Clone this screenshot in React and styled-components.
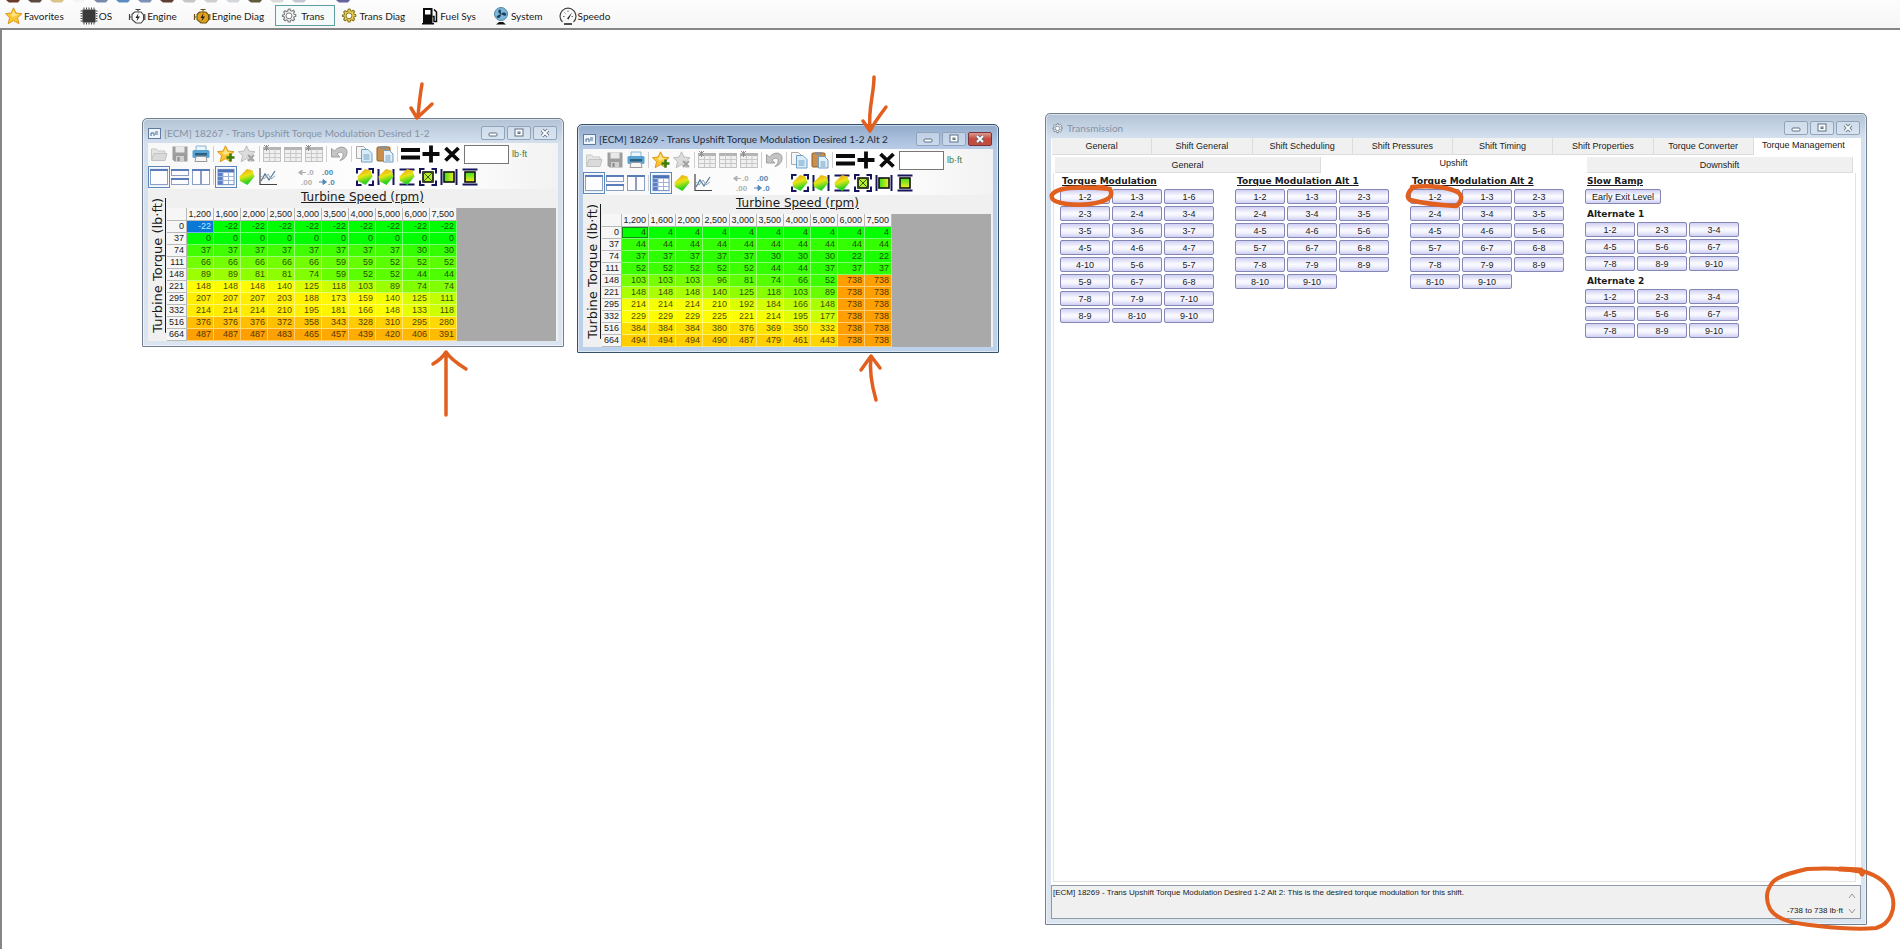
import React from 'react'
import styled, { createGlobalStyle, css } from 'styled-components'

const uiFont = "Lato, 'Open Sans', sans-serif"
const smallFont = "'Liberation Sans', sans-serif"
const wideFont = "'DejaVu Sans', sans-serif"
const ink = '#e2601f'

const GlobalStyle = createGlobalStyle`
    * { box-sizing: border-box; }
    body {
        margin: 0;
        background: #fff;
        font-family: ${uiFont};
        font-size: 10px;
        color: #1a1a1a;
    }
    button, input {
        font: inherit;
        color: inherit;
        margin: 0;
    }
`

const Shell = styled.div`
    position: relative;
    display: flex;
    flex-direction: column;
    min-height: 100vh;
    overflow: hidden;
`

/* ---------- top bars ---------- */

const TopBars = styled.header`
    background: linear-gradient(#fdfdfd, #f6f6f7);
`

const CutRow = styled.div`
    display: flex;
    height: 4px;
    padding-left: 4px;
    overflow: hidden;
`

const CutSlot = styled.svg`
    flex: none;
    width: 22px;
    height: 4px;
`

const NavRow = styled.nav`
    display: flex;
    align-items: center;
    height: 24px;
    padding-bottom: 1px;
`

const NavItem = styled.button`
    display: flex;
    align-items: center;
    gap: ${p => (p.$on ? 3 : 1)}px;
    height: 21px;
    padding: 0 10px 0 4px;
    border: 1px solid ${p => (p.$on ? '#5f9ea0' : 'transparent')};
    background: ${p => (p.$on ? '#f4fafa' : 'transparent')};
    font-size: 10px;
    white-space: nowrap;
    svg {
        width: 18px;
        height: 18px;
    }
`

const Desktop = styled.main`
    position: relative;
    flex: 1;
    border-top: 2px solid #868686;
    border-left: 2px solid #868686;
    background: #fff;
`

/* ---------- window frame ---------- */

const Frame = styled.section`
    position: absolute;
    display: flex;
    flex-direction: column;
    padding: 0 5px 5px;
    border: 1px solid ${p => (p.$active ? '#35506b' : '#717f8e')};
    border-radius: 5px 5px 1px 1px;
    background: ${p => (p.$active
        ? 'linear-gradient(#92abca, #b6cae6 22px, #bcd2ea)'
        : 'linear-gradient(#b3c4d6, #d4e0ee 24px, #dbe5f0)')};
    box-shadow: inset 0 0 0 1px rgba(255, 255, 255, 0.5);
`

const TableFrame = styled(Frame)`
    width: 422px;
`

const FirstPlace = styled(TableFrame)`
    left: 140px;
    top: 88px;
`

const SecondPlace = styled(TableFrame)`
    left: 575px;
    top: 94px;
`

const TransPlace = styled(Frame)`
    left: 1043px;
    top: 83px;
    width: 822px;
    height: 812px;
`

const TitleBar = styled.div`
    display: flex;
    align-items: center;
    gap: 3px;
    height: 24px;
    padding-top: 4px;
    color: ${p => (p.$active ? '#1c2a3c' : '#8593a4')};
    h1 {
        flex: 1;
        margin: 0;
        font-size: 10px;
        font-weight: 400;
        white-space: nowrap;
    }
`

const TitleIcon = styled.svg`
    width: 13px;
    height: 13px;
`

const WinButtons = styled.div`
    display: flex;
    gap: 2px;
    align-self: flex-start;
    margin: 3px 1px 0 0;
`

const WinButton = styled.button`
    display: flex;
    align-items: center;
    justify-content: center;
    width: 24px;
    height: 14px;
    padding: 0;
    border: 1px solid ${p => (p.$red ? '#7c3038' : '#92a4b9')};
    border-radius: 2px;
    background: ${p => (p.$red
        ? 'linear-gradient(#dd9a90, #c24a3e 50%, #c0503f)'
        : 'rgba(225, 235, 246, 0.5)')};
    svg {
        width: 12px;
        height: 10px;
    }
`

/* ---------- table editor ---------- */

const Body = styled.div`
    background: #f0f0f0;
`

const ToolRow = styled.div`
    display: flex;
    align-items: center;
    gap: 3px;
    height: ${p => (p.$tall ? 24 : 22)}px;
    padding-left: 2px;
    background: linear-gradient(90deg, #f8f8f8, #fff 70%, #f2f2f2);
`

const Tool = styled.button`
    display: flex;
    flex: none;
    width: 18px;
    height: 18px;
    padding: 0;
    border: 0;
    background: transparent;
    ${p => p.$on && css`
        outline: 1px solid #5b87bd;
        outline-offset: 1px;
        background: #e6effa;
    `}
    svg {
        width: 18px;
        height: 18px;
    }
`

const Sep = styled.span`
    width: 1px;
    height: 16px;
    background: #cfcfcf;
`

const Spacer = styled.span`
    width: ${p => p.$w}px;
`

const ValueBox = styled.input`
    width: 45px;
    height: 19px;
    border: 1px solid #777;
    background: #fff;
    font-family: ${smallFont};
`

const Unit = styled.label`
    font-family: ${smallFont};
    font-size: 9px;
    color: #3b7a3b;
`

const Sheet = styled.div`
    display: flex;
`

const YAxis = styled.div`
    display: flex;
    align-items: center;
    justify-content: center;
    width: 19px;
    span {
        writing-mode: vertical-rl;
        transform: rotate(180deg);
        font-family: ${wideFont};
        font-size: 13px;
        line-height: 16px;
        text-decoration: underline;
        white-space: nowrap;
    }
`

const SheetMain = styled.div`
    flex: 1;
`

const XAxis = styled.div`
    height: 19px;
    font-family: ${wideFont};
    font-size: 12px;
    line-height: 16px;
    text-align: center;
    text-decoration: underline;
`

const GridArea = styled.div`
    margin-right: 2px;
    background: #a9a9a9;
`

const Grid = styled.table`
    border-collapse: separate;
    border-spacing: 0;
    table-layout: fixed;
    width: 290px;
    font-family: ${smallFont};
    font-size: 9px;
    line-height: 11px;
    th, td {
        height: 12px;
        padding: 0 2px 0 0;
        text-align: right;
        font-weight: 400;
        border-right: 1px solid rgba(255, 255, 255, 0.45);
        border-bottom: 1px solid rgba(255, 255, 255, 0.45);
    }
    th {
        background: #f6f6f6;
        border-color: #b9b9b9;
        color: #222;
    }
    thead th { height: 13px; }
    th:first-child { width: 20px; }
`

const Cell = styled.td`
    color: ${p => (p.$mark === 'selected' ? '#bfe3ff' : 'rgba(30, 22, 0, 0.82)')};
    ${p => p.$mark === 'focus' && 'box-shadow: inset 0 0 0 1px #138a13;'}
`

/* ---------- transmission window ---------- */

const TabStrip = styled.div`
    display: flex;
    height: ${p => (p.$inner ? 16 : 17)}px;
    margin: ${p => (p.$inner ? '2px 8px 0 4px' : '0 7px 0 1px')};
`

const Tab = styled.button`
    flex: 1;
    padding: 0 0 ${p => (p.$on ? 3 : 0)}px;
    border: 0;
    border-right: 1px solid ${p => (p.$on ? '#fff' : '#dcdcdc')};
    border-bottom: 1px solid ${p => (p.$on ? '#fff' : '#dcdcdc')};
    background: ${p => (p.$on ? '#fff' : '#f0f0f0')};
    font-family: ${smallFont};
    font-size: 9px;
    line-height: 12px;
    white-space: nowrap;
`

const TransBody = styled.div`
    flex: 1;
    display: flex;
    flex-direction: column;
    background: #fff;
    min-height: 0;
`

const TransPanel = styled.div`
    flex: 1;
    display: flex;
    align-items: flex-start;
    gap: 20px;
    margin: 0 5px 3px 2px;
    padding: 2px 0 0 6px;
    border: 1px solid #e3e3e3;
    border-top: 0;
`

const Group = styled.div`
    width: 155px;
`

const GroupTitle = styled.h2`
    margin: 0 0 2px 2px;
    font-family: ${wideFont};
    font-size: 9px;
    line-height: 12px;
    font-weight: 700;
    text-decoration: ${p => (p.$plain ? 'none' : 'underline')};
    white-space: nowrap;
`

const GearGrid = styled.div`
    display: grid;
    grid-template-columns: repeat(3, 50px);
    gap: 2px;
    margin-bottom: 4px;
`

const GearButton = styled.button`
    height: 15px;
    width: ${p => (p.$wide ? 76 : 50)}px;
    padding: 0;
    border: 1px solid #8486b4;
    border-radius: 2px;
    background: linear-gradient(#cfcff3, #fafaff 45%, #f4f4fe 65%, #cfcff3);
    font-family: ${smallFont};
    font-size: 9px;
    line-height: 12px;
    white-space: nowrap;
`

const StatusBox = styled.footer`
    display: flex;
    justify-content: space-between;
    height: 34px;
    padding: 1px 4px 1px 1px;
    border: 1px solid #8f9aa6;
    background: #f0f0f0;
    font-family: ${smallFont};
    font-size: 8px;
    line-height: 12px;
    p { margin: 0; }
`

const Range = styled.div`
    display: flex;
    align-items: flex-end;
    gap: 5px;
    svg {
        width: 8px;
        height: 28px;
    }
`

const Ink = styled.svg`
    position: absolute;
    top: 0;
    left: 0;
    width: 100%;
    height: 100%;
    pointer-events: none;
    fill: none;
    stroke: ${ink};
    stroke-width: 3.5;
    stroke-linecap: round;
    stroke-linejoin: round;
`

/* ---------- icons ---------- */

const gearTeeth = 'M9 1.5l1.3 0 .5 2 1.5.6 1.8-1.1 1.7 1.7-1.1 1.8.6 1.5 2 .5v1.8l-2 .5-.6 1.5 1.1 1.8-1.7 1.7-1.8-1.1-1.5.6-.5 2H8l-.5-2-1.5-.6-1.8 1.1-1.7-1.7 1.1-1.8-.6-1.5-2-.5V9l2-.5.6-1.5-1.1-1.8 1.7-1.7L6 4.6l1.500-.6.5-2z'

const Gear = ({ line, fill }) => (
    <svg viewBox="-2 -1 22 22">
        <path d={gearTeeth} fill={fill} stroke={line} strokeWidth="1.300" />
        <circle cx="9" cy="9.800" r="3.600" fill="#fff" stroke={line} strokeWidth="1.200" />
    </svg>
)

const Star = ({ fill = '#fbc632', line = '#d99a1b', children }) => (
    <svg viewBox="0 0 18 18">
        <path d="M8.500.8l2.500 5.200 6 .7-4.500 4 1.400 6-5.400-3.100-5.300 3.100 1.400-6L.5 6.700 6.100 6z" fill={fill} stroke={line} strokeLinejoin="round" />
        {fill === '#fbc632' && <path d="M8.500 3.200l1.600 3.900 3.800.4-6 2.500-2.600-2.500 1.800-.4z" fill="#fde58a" />}
        {children}
    </svg>
)

const EngineIcon = ({ fill, line }) => (
    <svg viewBox="0 0 18 18">
        <path d="M7.500 2.500h5M10 2.500v2M1.500 7v6M1.500 10h2M16.800 7v6" stroke={line} strokeWidth="1.200" fill="none" />
        <path d="M4 7.500L6.500 5H13l2.500 3v5l-2.500 3H8l-4-3.500z" fill={fill} stroke={line} strokeWidth="1.100" />
        <path d="M10.500 6L7.500 11h2l-1 3.500 3.500-5h-2.200z" fill="#222" />
    </svg>
)

const TableIcon = ({ star }) => (
    <svg viewBox="0 0 18 18">
        <rect x="0.500" y="2.500" width="17" height="14" fill="#f0f0f0" stroke="#c2c2c2" />
        <path d="M0 3.500h18" stroke="#b4b4b4" strokeWidth="3" />
        <path d="M.5 8.500h17M.5 12.500h17M6.500 4v12M12 4v12" stroke="#c8c8c8" />
        {star && <path d="M1 0l5 5M6 0L1 5M3.500 0v6" stroke="#8e8e8e" />}
    </svg>
)

const Surface = ({ frame }) => (
    <svg viewBox="0 0 18 18">
        {frame}
        <path d="M1.500 8.500L9 1l5.500 1.500 2 6L9.500 17 2 13z" fill="url(#surf)" />
    </svg>
)

const BoxIcon = ({ frame, inner }) => (
    <svg viewBox="0 0 18 18">
        {frame}
        <rect x="4" y="4" width="10" height="10" fill={inner || '#b6ef2e'} stroke="#111" strokeWidth="1.600" />
        {!inner && <path d="M4 4l10 10M14 4L4 14" stroke="#3b5a10" />}
    </svg>
)

const corners = <path d="M1 5.500V1h4.500M12.500 1H17v4.500M17 12.500V17h-4.500M5.500 17H1v-4.500" fill="none" stroke="#16165e" strokeWidth="2" />
const sides = <path d="M1.500 1v16M16.500 1v16" stroke="#16165e" strokeWidth="2" />
const caps = <path d="M1.500 1.500h15M1.500 16.500h15" stroke="#16165e" strokeWidth="2" />

const PaneBox = ({ x, y, w, h }) => (
    <>
        <rect x={x + 0.5} y={y + 0.5} width={w - 1} height={h - 1} fill="#fdfdff" stroke="#8c9fc2" />
        <path d={`M${x} ${y + 1}h${w}`} stroke="#5a7cba" strokeWidth="2" />
    </>
)

const DecimalIcon = ({ up }) => (
    <svg viewBox="0 0 18 18" fontFamily="Liberation Sans, sans-serif" fontWeight="700" fontSize="8" fill={up ? '#5189b5' : '#b0b0b0'}>
        <text x={up ? 3 : 9} y="7">{up ? '.00' : '.0'}</text>
        <text x={up ? 9 : 3} y="17">{up ? '.0' : '.00'}</text>
        <path d={up ? 'M0 14h4M4 11.500l3.500 2.500L4 16.500z' : 'M4 4.500h4M4 2L.5 4.500 4 7z'} stroke={up ? '#5189b5' : '#b0b0b0'} />
    </svg>
)

const icons = {
    folder: <svg viewBox="0 0 18 18"><path d="M1.500 15V4h5l1.500 2h7v3" fill="#e4e4e4" stroke="#c8c8c8" /><path d="M1.500 15.500L4 8.500h13L15 15.500z" fill="#dadada" stroke="#c2c2c2" /></svg>,
    save: <svg viewBox="0 0 18 18"><path d="M1.500 1.500h15v15h-13l-2-2z" fill="#9d9d9d" /><path d="M4.500 1.500h9v6h-9z" fill="#e8e8e8" /><path d="M5 11h8v5.500H5z" fill="#cfcfcf" /><path d="M6.500 12h2v4h-2z" fill="#888" /></svg>,
    print: <svg viewBox="0 0 18 18"><path d="M4 1h10v6H4z" fill="#eaf5fc" stroke="#8cb4cf" /><rect x="0.500" y="5" width="17" height="8" rx="1.500" fill="#58a3d3" /><path d="M3 8h12v2.500H3z" fill="#2f5f80" /><path d="M4 11.500h10l1 5H3z" fill="#f5f5f5" stroke="#999" /></svg>,
    starAdd: <Star><path d="M13.500 8.500v8M9.500 12.500h8" stroke="#3c7d10" strokeWidth="2.600" /></Star>,
    starDel: <Star fill="#dcdcdc" line="#bcbcbc"><path d="M10 10l6 6M16 10l-6 6" stroke="#a2a2a2" strokeWidth="2" /></Star>,
    table: <TableIcon />,
    tableStar: <TableIcon star />,
    undo: <svg viewBox="0 0 18 18"><path d="M1.500 3.500v8.500h8.500l-3-3c3-3 7-2 6 2-.4 2-2 3-3 4.500 4-1 7-4 7-8.500 0-5-7-7.500-12.500-1z" fill="#c4c4c4" stroke="#9f9f9f" /></svg>,
    copy: <svg viewBox="0 0 18 18"><path d="M1.500 1.500h7l3 3v9h-10z" fill="#f5f5f5" stroke="#aaa" /><path d="M6.500 4.500h6.500l4 4v8.500H6.500z" fill="#d9ecf8" stroke="#6fa1c4" /><path d="M8.500 10h6M8.500 12h6M8.500 14h6" stroke="#6fa1c4" /></svg>,
    paste: <svg viewBox="0 0 18 18"><rect x="1" y="2" width="13" height="14" rx="1" fill="#c98f4b" stroke="#8f6128" /><path d="M4 1h7v3H4z" fill="#8f8f8f" /><path d="M7.500 5.500h6l3.500 3.500v8H7.500z" fill="#e4f1fa" stroke="#6f9dbf" /><path d="M9.500 11h5M9.500 13h5M9.500 15h5" stroke="#6f9dbf" /></svg>,
    equal: <svg viewBox="0 0 18 18" overflow="visible"><path d="M0 5h19M0 12.500h19" stroke="#0b0b0b" strokeWidth="4.200" /></svg>,
    plus: <svg viewBox="0 0 18 18"><path d="M0.500 9h17M9 0.500v17" stroke="#0b0b0b" strokeWidth="3.800" /></svg>,
    times: <svg viewBox="0 0 18 18"><path d="M2.500 3l13 12.500M15.500 3l-13 12.500" stroke="#0b0b0b" strokeWidth="3.800" /></svg>,
    paneOne: <svg viewBox="0 0 18 18"><PaneBox x={0} y={1} w={18} h={16} /></svg>,
    paneRows: <svg viewBox="0 0 18 18"><PaneBox x={0} y={1} w={18} h={7} /><PaneBox x={0} y={10} w={18} h={7} /></svg>,
    paneCols: <svg viewBox="0 0 18 18"><PaneBox x={0} y={1} w={9} h={16} /><PaneBox x={9} y={1} w={9} h={16} /></svg>,
    gridView: <svg viewBox="0 0 18 18"><rect x="1" y="1.500" width="16" height="15" fill="#fff" stroke="#7e97c4" /><path d="M1 3h16" stroke="#4e73b8" strokeWidth="3" /><path d="M1 5h5v11.500H1z" fill="#5b80c8" /><path d="M1 8.500h16M1 12.500h16M6 4v12M11.500 4v12" stroke="#9fb4d8" /></svg>,
    surface: <Surface />,
    chart: <svg viewBox="0 0 18 18"><path d="M1 0v16.500h17" stroke="#444" fill="none" strokeWidth="1.200" /><path d="M2 13l4-7 4 6 6-9" stroke="#4f7596" fill="none" strokeWidth="1.200" /><path d="M2 8l3 3 4-5 3 5 4-3" stroke="#8fa9bd" fill="none" /></svg>,
    decDown: <DecimalIcon />,
    decUp: <DecimalIcon up />,
    surfAll: <Surface frame={corners} />,
    surfSides: <Surface frame={sides} />,
    surfCaps: <Surface frame={caps} />,
    boxAll: <BoxIcon frame={corners} />,
    boxSides: <BoxIcon frame={sides} inner="url(#across)" />,
    boxCaps: <BoxIcon frame={caps} inner="url(#down)" />,
}

const toolsTop = [
    ['folder', 'Open'], ['save', 'Save'], ['print', 'Print'], '|',
    ['starAdd', 'Add favorite'], ['starDel', 'Remove favorite'], '|',
    ['tableStar', 'Table labels'], ['table', 'Column labels'], ['tableStar', 'Row labels'], '|',
    ['undo', 'Undo'], '|',
    ['copy', 'Copy'], ['paste', 'Paste'], '|',
    ['equal', 'Set'], ['plus', 'Add'], ['times', 'Multiply'],
]

const toolsBottom = [
    ['paneOne', 'Single pane', true], ['paneRows', 'Split rows'], ['paneCols', 'Split columns'], '|',
    ['gridView', 'Grid', true], ['surface', 'Surface'], ['chart', 'Chart'], 15,
    ['decDown', 'Fewer decimals'], ['decUp', 'More decimals'], 13,
    ['surfAll', 'Interpolate all'], ['surfSides', 'Interpolate across'], ['surfCaps', 'Interpolate down'],
    ['boxAll', 'Fill all'], ['boxSides', 'Fill across'], ['boxCaps', 'Fill down'],
]

const navItems = [
    ['Favorites', <Star />],
    ['OS', <svg viewBox="0 0 18 18"><rect x="2.500" y="2.500" width="13" height="13" fill="#3a3a3a" /><path d="M4 .5v17M6.500 .5v17M9 .5v17M11.500 .5v17M14 .5v17" stroke="#444" strokeDasharray="2 13" /><path d="M.5 4h17M.5 6.500h17M.5 9h17M.5 11.500h17M.5 14h17" stroke="#444" strokeDasharray="2 13" /></svg>],
    ['Engine', <EngineIcon fill="#fff" line="#444" />],
    ['Engine Diag', <EngineIcon fill="#e0a21c" line="#6b5017" />],
    ['Trans', <Gear line="#777" fill="#f4f4f4" />],
    ['Trans Diag', <Gear line="#8a761e" fill="#e8cf55" />],
    ['Fuel Sys', <svg viewBox="0 0 18 18"><path d="M2 1h9.500v15H13v1.500H1V16h1z" fill="#0b0b0b" /><path d="M4 3h5.500v4.500H4z" fill="#fff" /><path d="M11.500 9.500H13v5h2.500V5L13 2.500" fill="none" stroke="#0b0b0b" strokeWidth="1.500" /></svg>],
    ['System', <svg viewBox="0 0 18 18"><circle cx="9" cy="7" r="6.500" fill="#7db6d6" stroke="#4f86a8" /><path d="M9 7C5 6 6 2 8.500 2.500 9 4 9 5 9 7c3-3 6-1 5 1.500C12 9 10.500 8 9 7c0 4-3 5-4.500 3C5 8.500 7 7.500 9 7z" fill="#173f5c" /><path d="M4 17.500h10l-3-2.500H7z" fill="#111" /></svg>],
    ['Speedo', <svg viewBox="0 0 18 18"><path d="M3.500 15a8 8 0 1 1 11 0" fill="none" stroke="#444" strokeWidth="1.200" /><path d="M8 11.500l5-6-3.500 7z" fill="#222" /><path d="M5 17h8" stroke="#222" strokeWidth="1.600" /><path d="M4 9.500h1.500M9 3.500v1.500M12.500 9.500H14M5.500 5.500l1 1" stroke="#666" /></svg>],
]

const cutColors = ['#6b3b2a', '#5a4a42', '#d9c388', '#f5f5f5', '#7a8aa8', '#5b8dc4', '#7b90b5', '#5f3f33', '#c6c6c6', '#cfcfcf', '#d3d6dc', '#5e5a3c', '#dadada', '#c3c7cf', '#fafafa', '#6465a0']

const rpm = ['1,200', '1,600', '2,000', '2,500', '3,000', '3,500', '4,000', '5,000', '6,000', '7,500']
const torque = [0, 37, 74, 111, 148, 221, 295, 332, 516, 664]

const upshift = [
    [-22, -22, -22, -22, -22, -22, -22, -22, -22, -22],
    [0, 0, 0, 0, 0, 0, 0, 0, 0, 0],
    [37, 37, 37, 37, 37, 37, 37, 37, 30, 30],
    [66, 66, 66, 66, 66, 59, 59, 52, 52, 52],
    [89, 89, 81, 81, 74, 59, 52, 52, 44, 44],
    [148, 148, 148, 140, 125, 118, 103, 89, 74, 74],
    [207, 207, 207, 203, 188, 173, 159, 140, 125, 111],
    [214, 214, 214, 210, 195, 181, 166, 148, 133, 118],
    [376, 376, 376, 372, 358, 343, 328, 310, 295, 280],
    [487, 487, 487, 483, 465, 457, 439, 420, 406, 391],
]

const upshiftAlt = [
    [4, 4, 4, 4, 4, 4, 4, 4, 4, 4],
    [44, 44, 44, 44, 44, 44, 44, 44, 44, 44],
    [37, 37, 37, 37, 37, 30, 30, 30, 22, 22],
    [52, 52, 52, 52, 52, 44, 44, 37, 37, 37],
    [103, 103, 103, 96, 81, 74, 66, 52, 738, 738],
    [148, 148, 148, 140, 125, 118, 103, 89, 738, 738],
    [214, 214, 214, 210, 192, 184, 166, 148, 738, 738],
    [229, 229, 229, 225, 221, 214, 195, 177, 738, 738],
    [384, 384, 384, 380, 376, 369, 350, 332, 738, 738],
    [494, 494, 494, 490, 487, 479, 461, 443, 738, 738],
]

const mainTabs = ['General', 'Shift General', 'Shift Scheduling', 'Shift Pressures', 'Shift Timing', 'Shift Properties', 'Torque Converter', 'Torque Management']
const subTabs = ['General', 'Upshift', 'Downshift']

const modulation = '1-2 1-3 1-6 2-3 2-4 3-4 3-5 3-6 3-7 4-5 4-6 4-7 4-10 5-6 5-7 5-9 6-7 6-8 7-8 7-9 7-10 8-9 8-10 9-10'.split(' ')
const modulationAlt = '1-2 1-3 2-3 2-4 3-4 3-5 4-5 4-6 5-6 5-7 6-7 6-8 7-8 7-9 8-9 8-10 9-10'.split(' ')
const alternate = '1-2 2-3 3-4 4-5 5-6 6-7 7-8 8-9 9-10'.split(' ')

// green at the bottom of the range, yellow at 30 %, orange at the top
const heat = (value, max) => {
    const t = Math.max(0, value) / max
    if (t < 0.3) return `rgb(${Math.round((255 * t) / 0.3)}, 255, 0)`
    return `rgb(255, ${Math.round(255 - (95 * (t - 0.3)) / 0.7)}, 0)`
}

const cellColor = (value, max, mark) => (mark === 'selected' ? '#0a78d7' : heat(value, max))

const ToolItems = ({ items }) => items.map((item, i) => {
    if (item === '|') return <Sep key={i} />
    if (typeof item === 'number') return <Spacer key={i} $w={item} />
    return <Tool key={i} $on={item[2]} aria-label={item[1]}>{icons[item[0]]}</Tool>
})

const WindowControls = ({ active }) => {
    const line = '#5c7086'
    return (
        <WinButtons>
            <WinButton aria-label="Minimize">
                <svg viewBox="0 0 12 10"><rect x="2" y="5" width="8" height="3" rx="1" fill="#fff" stroke={line} /></svg>
            </WinButton>
            <WinButton aria-label="Maximize">
                <svg viewBox="0 0 12 10"><rect x="2" y="1" width="8" height="7" fill="#fff" stroke={line} /><rect x="5" y="4" width="2" height="1.500" fill="none" stroke={line} /></svg>
            </WinButton>
            <WinButton $red={active} aria-label="Close">
                <svg viewBox="0 0 12 10">
                    <path d="M3 2l6 6M9 2l-6 6" stroke={line} strokeWidth="3.600" />
                    <path d="M3 2l6 6M9 2l-6 6" stroke="#fff" strokeWidth="1.800" />
                </svg>
            </WinButton>
        </WinButtons>
    )
}

const TableWindow = ({ as: Place, id, title, active, rows, max, mark }) => (
    <Place $active={active}>
        <TitleBar $active={active}>
            <TitleIcon viewBox="0 0 13 13">
                <rect x="0.500" y="1.500" width="12" height="10" fill="#eef4fb" stroke="#5f7ba0" />
                <path d="M3 9V6h3v3M7 5h3M7 7h3" stroke="#4b6b96" fill="none" />
            </TitleIcon>
            <h1>{title}</h1>
            <WindowControls active={active} />
        </TitleBar>
        <Body>
            <ToolRow>
                <ToolItems items={toolsTop} />
                <ValueBox id={id} />
                <Unit htmlFor={id}>lb·ft</Unit>
            </ToolRow>
            <ToolRow $tall>
                <ToolItems items={toolsBottom} />
            </ToolRow>
            <Sheet>
                <YAxis><span>Turbine Torque (lb·ft)</span></YAxis>
                <SheetMain>
                    <XAxis>Turbine Speed (rpm)</XAxis>
                    <GridArea>
                        <Grid>
                            <thead>
                                <tr>
                                    <th />
                                    {rpm.map(r => <th key={r} scope="col">{r}</th>)}
                                </tr>
                            </thead>
                            <tbody>
                                {rows.map((row, y) => (
                                    <tr key={torque[y]}>
                                        <th scope="row">{torque[y]}</th>
                                        {row.map((value, x) => {
                                            const state = x === 0 && y === 0 ? mark : undefined
                                            return (
                                                <Cell key={x} $mark={state} style={{ backgroundColor: cellColor(value, max, state) }}>
                                                    {value}
                                                </Cell>
                                            )
                                        })}
                                    </tr>
                                ))}
                            </tbody>
                        </Grid>
                    </GridArea>
                </SheetMain>
            </Sheet>
        </Body>
    </Place>
)

const Gears = ({ list }) => (
    <GearGrid>
        {list.map(g => <GearButton key={g}>{g}</GearButton>)}
    </GearGrid>
)

const TransmissionWindow = () => (
    <TransPlace>
        <TitleBar>
            <TitleIcon as="span"><Gear line="#66727f" fill="#e8eef5" /></TitleIcon>
            <h1>Transmission</h1>
            <WindowControls />
        </TitleBar>
        <TransBody>
            <TabStrip role="tablist">
                {mainTabs.map(t => (
                    <Tab key={t} role="tab" aria-selected={t === 'Torque Management'} $on={t === 'Torque Management'}>{t}</Tab>
                ))}
            </TabStrip>
            <TabStrip role="tablist" $inner>
                {subTabs.map(t => (
                    <Tab key={t} role="tab" aria-selected={t === 'Upshift'} $on={t === 'Upshift'}>{t}</Tab>
                ))}
            </TabStrip>
            <TransPanel>
                <Group>
                    <GroupTitle>Torque Modulation</GroupTitle>
                    <Gears list={modulation} />
                </Group>
                <Group>
                    <GroupTitle>Torque Modulation Alt 1</GroupTitle>
                    <Gears list={modulationAlt} />
                </Group>
                <Group>
                    <GroupTitle>Torque Modulation Alt 2</GroupTitle>
                    <Gears list={modulationAlt} />
                </Group>
                <Group>
                    <GroupTitle>Slow Ramp</GroupTitle>
                    <GearGrid><GearButton $wide>Early Exit Level</GearButton></GearGrid>
                    <GroupTitle $plain>Alternate 1</GroupTitle>
                    <Gears list={alternate} />
                    <GroupTitle $plain>Alternate 2</GroupTitle>
                    <Gears list={alternate} />
                </Group>
            </TransPanel>
        </TransBody>
        <StatusBox>
            <p>[ECM] 18269 - Trans Upshift Torque Modulation Desired 1-2 Alt 2: This is the desired torque modulation for this shift.</p>
            <Range>
                <p>-738 to 738 lb·ft</p>
                <svg viewBox="0 0 8 28"><path d="M1 9l3-4 3 4M1 20l3 4 3-4" fill="none" stroke="#999" /></svg>
            </Range>
        </StatusBox>
    </TransPlace>
)

const App = () => {
    return (
        <>
            <GlobalStyle />
            <Shell>
                <svg width="0" height="0" style={{ position: 'absolute' }}>
                    <linearGradient id="surf" x1="0" y1="0" x2="0.300" y2="1">
                        <stop offset="0.100" stopColor="#f0a31a" />
                        <stop offset="0.500" stopColor="#e6e614" />
                        <stop offset="0.900" stopColor="#2fd321" />
                    </linearGradient>
                    <linearGradient id="across">
                        <stop offset="0" stopColor="#3fdc1f" />
                        <stop offset="1" stopColor="#f4f01c" />
                    </linearGradient>
                    <linearGradient id="down" x2="0" y2="1">
                        <stop offset="0" stopColor="#3fdc1f" />
                        <stop offset="1" stopColor="#f4f01c" />
                    </linearGradient>
                </svg>
                <TopBars>
                    <CutRow>
                        {cutColors.map((c, i) => (
                            <CutSlot key={i} viewBox="0 0 22 4">
                                <path d="M2 0h14l-2 2.500H5z" fill={c} />
                            </CutSlot>
                        ))}
                    </CutRow>
                    <NavRow>
                        {navItems.map(([label, icon]) => (
                            <NavItem key={label} $on={label === 'Trans'}>
                                {icon}
                                {label}
                            </NavItem>
                        ))}
                    </NavRow>
                </TopBars>
                <Desktop>
                    <TableWindow
                        as={FirstPlace}
                        id="value-18267"
                        title="[ECM] 18267 - Trans Upshift Torque Modulation Desired 1-2"
                        rows={upshift}
                        max={487}
                        mark="selected"
                    />
                    <TableWindow
                        as={SecondPlace}
                        id="value-18269"
                        title="[ECM] 18269 - Trans Upshift Torque Modulation Desired 1-2 Alt 2"
                        active
                        rows={upshiftAlt}
                        max={738}
                        mark="focus"
                    />
                    <TransmissionWindow />
                </Desktop>
                <Ink>
                    <path d="M422 84C420 95 419 105 418 116M411 108l6 10 15-14" />
                    <path d="M446 353v62M433 364c5-3 10-7 13-12 4 6 12 12 20 17" />
                    <path d="M874 77c0 18-6 30-4 52M863 121l7 10c4-8 10-16 16-24" />
                    <path d="M876 400c-4-14-7-28-5-43M861 370l10-14 9 12" />
                    <path strokeWidth="4.500" d="M1110 189C1098 188 1082 187 1070 188C1058 189 1050 193 1052 198C1054 204 1076 206 1090 204C1104 202 1113 198 1111 192C1110 188 1104 187 1098 187" />
                    <path strokeWidth="4.500" d="M1414 187C1408 191 1406 197 1410 200C1422 203 1440 205 1456 206C1461 203 1463 197 1459 193C1450 187 1430 185 1412 187" />
                    <path strokeWidth="4" d="M1862 872c-18-4-38-4-55-3-13 3-30 7-35 14-6 8-7 16-2 26 8 13 30 15 48 17 18 2 40 4 58 2 15-4 20-20 16-33-4-12-15-20-30-24" />
                    <path d="M1840 869l21 1 1 4" strokeWidth="5" />
                </Ink>
            </Shell>
        </>
    )
}

export default App
